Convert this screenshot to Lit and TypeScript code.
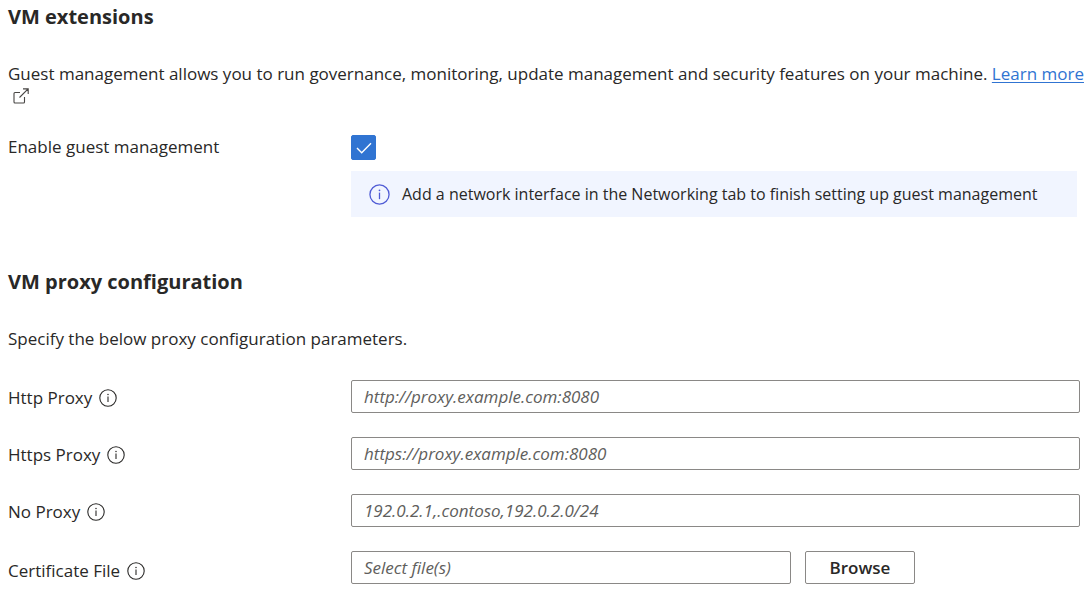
import { LitElement, html, css } from "lit";
import { customElement, property } from "lit/decorators.js";

@customElement("info-icon")
class InfoIcon extends LitElement {
  static styles = css`
    :host { display: inline-flex; flex: none; width: 18px; height: 18px; }
    svg { display: block; width: 100%; height: 100%; }
  `;
  render() {
    return html`<svg viewBox="0 0 18 18" aria-hidden="true" fill="none" stroke="currentColor">
      <circle cx="9" cy="9" r="8.2" stroke-width="1.1"></circle>
      <path d="M9 7.4V13" stroke-width="1.1"></path>
      <circle cx="9" cy="5.4" r=".75" fill="currentColor" stroke="none"></circle>
    </svg>`;
  }
}

@customElement("app-root")
class AppRoot extends LitElement {
  @property({ type: Boolean }) enabled = true;

  static fields = [
    { id: "http", label: "Http Proxy", hint: "http://proxy.example.com:8080" },
    { id: "https", label: "Https Proxy", hint: "https://proxy.example.com:8080" },
    { id: "none", label: "No Proxy", hint: "192.0.2.1,.contoso,192.0.2.0/24" },
  ];

  static styles = css`
    :host {
      display: block;
      box-sizing: border-box;
      padding: 4px 4px 12px 8px;
      background: #fff;
      color: #292827;
      font: 17px/21px "Open Sans", "Noto Sans", sans-serif;
    }
    * { box-sizing: border-box; }
    h2 { margin: 0; font-size: 20px; line-height: 26px; font-weight: 700; }
    p { margin: 0; }
    .intro { margin-top: 33px; }
    a { color: #3074d2; text-decoration: underline; text-underline-offset: 2px; }
    .external { display: inline-block; width: 16px; height: 16px; margin-left: 5px; vertical-align: -3px; color: #484644; }
    .row { display: grid; grid-template-columns: 343px 1fr; margin-right: 8px; }
    .guest { margin-top: 30px; }
    .guest label { line-height: 24px; }
    .check { appearance: none; display: block; width: 25px; height: 25px; margin: 0; border: 1px solid #3074d2; border-radius: 2px; background: #fff; }
    .check:checked { background: #3074d2; }
    .tick { display: grid; width: 25px; }
    .tick > * { grid-area: 1 / 1; }
    .tick svg { width: 25px; height: 25px; pointer-events: none; }
    .notice { display: flex; align-items: center; gap: 12px; min-height: 46px; margin: 11px 3px 0 0; padding: 0 18px; background: #f1f5ff; font-size: 16px; }
    .notice info-icon { width: 21px; height: 21px; color: #4f5bd5; }
    .proxy { margin-top: 52px; }
    .form { display: grid; gap: 22px; margin-top: 31px; }
    .name { display: flex; align-items: center; gap: 7px; height: 35px; }
    .name.tall { height: 39px; }
    .text { width: 100%; height: 33px; padding: 0 12px; border: 1px solid #8a8886; border-radius: 2px; background: #fff; color: inherit; font: inherit; }
    .text::placeholder { color: #605e5c; font-style: italic; opacity: 1; }
    .files { display: grid; grid-template-columns: minmax(0, 440px) 110px; gap: 14px; }
    button { height: 33px; padding: 0; border: 1px solid #8a8886; border-radius: 2px; background: #fff; color: inherit; font: inherit; font-weight: 600; }
  `;

  toggle(e: Event) { this.enabled = (e.target as HTMLInputElement).checked; }

  render() {
    return html`
      <section>
        <h2>VM extensions</h2>
        <p class="intro">Guest management allows you to run governance, monitoring, update management and security features on your machine. <a href="#">Learn more</a>
          <svg class="external" viewBox="0 0 16 16" fill="none" stroke="currentColor" stroke-width="1.1" aria-hidden="true"><path d="M7 4.5H2q-1 0-1 1V14q0 1 1 1h8.5q1 0 1-1V9M10 .9h5.2V6M15.1.9 6.5 9.5"></path></svg></p>
        <div class="row guest">
          <label for="guest">Enable guest management</label>
          <div>
            <div class="tick">
              <input class="check" id="guest" type="checkbox" .checked=${this.enabled} @change=${this.toggle}>
              <svg viewBox="0 0 25 25" fill="none" stroke="#fff" stroke-width="1.4" aria-hidden="true"><path d="m6 13 4.7 4.7L20 8.3"></path></svg>
            </div>
            <div class="notice"><info-icon></info-icon><span>Add a network interface in the Networking tab to finish setting up guest management</span></div>
          </div>
        </div>
      </section>
      <section class="proxy">
        <h2>VM proxy configuration</h2>
        <p class="intro">Specify the below proxy configuration parameters.</p>
        <div class="form">
          ${AppRoot.fields.map(f => html`<div class="row">
            <label class="name" for=${f.id}>${f.label}<info-icon></info-icon></label>
            <input class="text" id=${f.id} type="text" placeholder=${f.hint}>
          </div>`)}
          <div class="row">
            <label class="name tall" for="cert">Certificate File<info-icon></info-icon></label>
            <div class="files"><input class="text" id="cert" type="text" placeholder="Select file(s)"><button type="button">Browse</button></div>
          </div>
        </div>
      </section>`;
  }
}
